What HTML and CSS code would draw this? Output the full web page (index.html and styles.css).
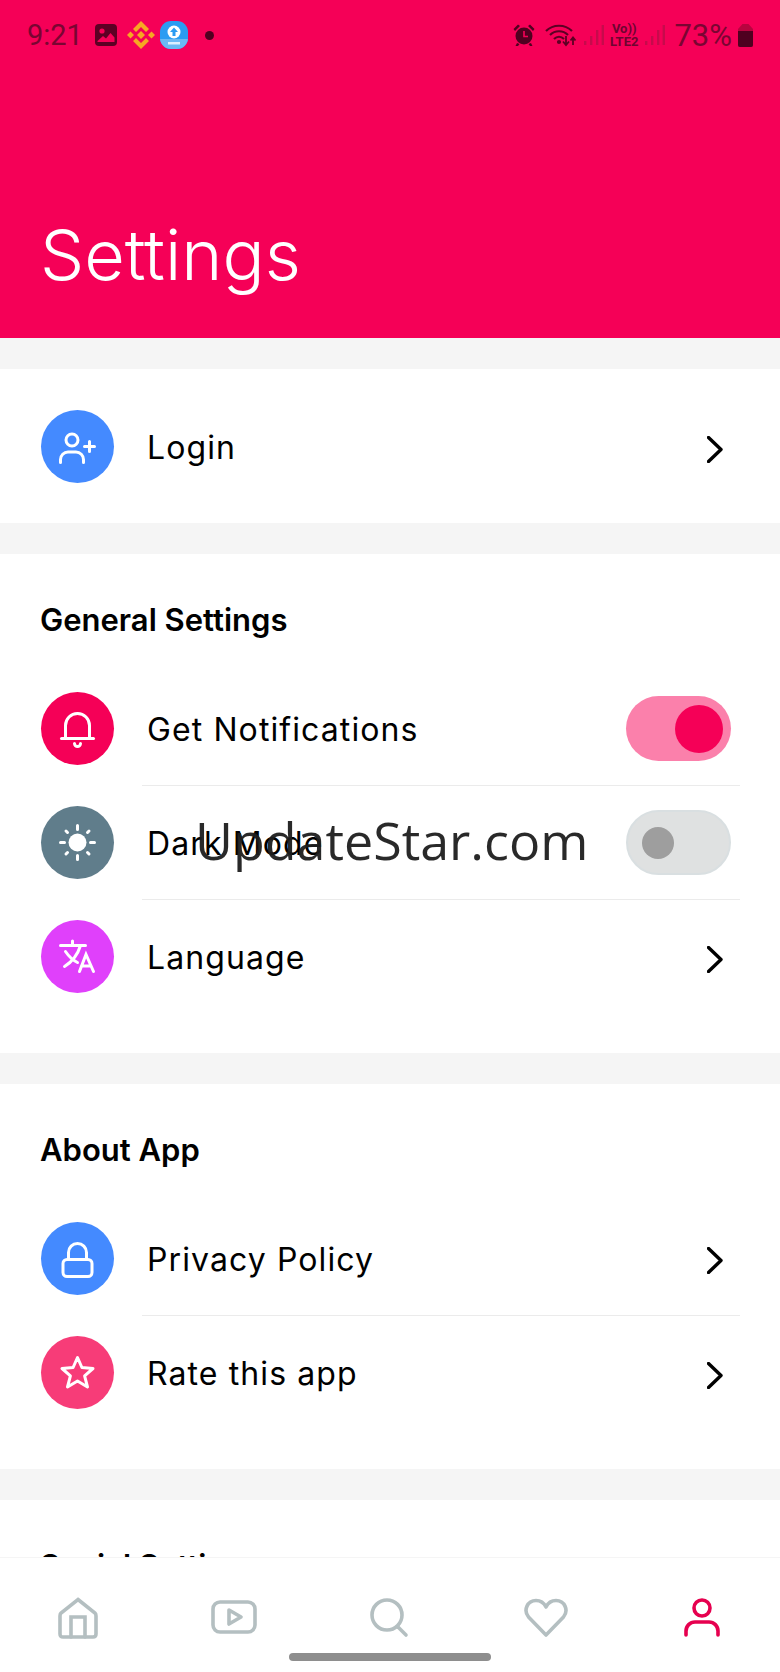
FILE: index.html
```html
<!DOCTYPE html>
<html lang="en">
<head>
  <meta charset="UTF-8">
  <title>Settings</title>
  <link rel="stylesheet" href="styles.css">
</head>
<body>
  <div class="screen">
    <div class="content">
      <header class="header">
        <div class="status">
          <span class="time">9:21</span>
          <svg class="st-gallery" width="24" height="24" viewBox="0 0 24 24"><rect x="1" y="1" width="22" height="22" rx="4" fill="#5c0024"/><circle cx="8" cy="8" r="2.6" fill="#f50057"/><path d="M3.5 18 L9 13 L12 15.5 L16.5 10 L20.5 14.5 V19 H3.5 Z" fill="#f50057"/></svg>
          <svg class="st-binance" width="28" height="28" viewBox="-14 -14 28 28" fill="#f6a623"><path d="M-4 0 L0 -4 L4 0 L0 4 Z"/><path d="M-14 0 L-10.5 -3.5 L-7 0 L-10.5 3.5 Z"/><path d="M7 0 L10.5 -3.5 L14 0 L10.5 3.5 Z"/><path d="M0 -14 L8 -6 L5 -3 L0 -8 L-5 -3 L-8 -6 Z"/><path d="M0 14 L8 6 L5 3 L0 8 L-5 3 L-8 6 Z"/></svg>
          <svg class="st-app" width="28" height="28" viewBox="0 0 28 28"><rect width="28" height="28" rx="11" fill="#2b9cf2"/><path d="M0 18 H28 V17 A11 11 0 0 1 17 28 H11 A11 11 0 0 1 0 17 Z" fill="#6bb9f3"/><circle cx="14" cy="11" r="6.5" fill="#fff"/><path d="M14 6.5 L18 11 H15.5 V15 H12.5 V11 H10 Z" fill="#2b9cf2"/><rect x="8" y="21" width="12" height="2.5" fill="#dcefff"/></svg>
          <span class="st-dot"></span>
          <span class="st-gap"></span>
          <svg class="st-alarm" width="22" height="24" viewBox="0 0 22 24" fill="#4f0020"><circle cx="11" cy="13" r="8.5"/><path d="M0.5 6 L5 1.5 L7 3 L2 8 Z M21.5 6 L17 1.5 L15 3 L20 8 Z M4 20 L2.5 23 H5 L6.5 21 Z M18 20 L19.5 23 H17 L15.5 21 Z"/><path d="M11 8 V13.5 H15" fill="none" stroke="#f50057" stroke-width="1.6"/></svg>
          <svg class="st-wifi" width="32" height="24" viewBox="0 0 32 24" fill="none" stroke="#5c0024" stroke-width="2.2"><path d="M1 8 C8 1 20 1 27 8"/><path d="M5 12 C10 7 18 7 23 12"/><path d="M9 16 C12 13 16 13 19 16"/><circle cx="14" cy="19" r="1" fill="#5c0024"/><path d="M21 13 V21 M18 18.5 L21 22 L24 18.5" stroke-width="1.8"/><path d="M28 22 V15 M25.5 17.5 L28 14.5 L30.5 17.5" stroke-width="1.8"/></svg>
          <svg class="st-signal" width="20" height="22" viewBox="0 0 20 22" fill="#c70a4c"><rect x="0" y="17" width="2.4" height="4"/><rect x="6" y="12" width="2.4" height="9"/><rect x="12" y="6" width="2.4" height="15"/><rect x="17.6" y="1" width="2.4" height="20"/></svg>
          <span class="st-volte"><span>Vo))</span><span>LTE2</span></span>
          <svg class="st-signal" width="20" height="22" viewBox="0 0 20 22" fill="#c70a4c"><rect x="0" y="17" width="2.4" height="4"/><rect x="6" y="12" width="2.4" height="9"/><rect x="12" y="6" width="2.4" height="15"/><rect x="17.6" y="1" width="2.4" height="20"/></svg>
          <span class="st-batt-text">73%</span>
          <svg class="st-batt" width="15" height="23" viewBox="0 0 15 23"><path d="M4.5 0 H10.5 L15 5 V21 A2 2 0 0 1 13 23 H2 A2 2 0 0 1 0 21 V5 Z" fill="#b8043f"/><path d="M0 7 H15 V21 A2 2 0 0 1 13 23 H2 A2 2 0 0 1 0 21 Z" fill="#4f0020"/></svg>
        </div>
        <h1 class="title">Settings</h1>
      </header>

      <section class="card card-login">
        <div class="row">
          <span class="icon icon-blue">
            <svg width="73" height="73" viewBox="-36.5 -36.5 73 73"><circle cx="-5.5" cy="-6.5" r="6"/><path d="M-17 16 V13 a7.5 7.5 0 0 1 7.5 -7.5 H-1.5 a7.5 7.5 0 0 1 7.5 7.5 V16"/><path d="M12 -5 V5 M7 0 H17"/></svg>
          </span>
          <div class="row-body no-line">
            <span class="label">Login</span>
            <svg class="chevron" width="16" height="27" viewBox="0 0 16 27"><path d="M1.5 1.5 L14 13.5 L1.5 25.5"/></svg>
          </div>
        </div>
      </section>

      <section class="card">
        <h2 class="card-title">General Settings</h2>
        <div class="row">
          <span class="icon icon-pink">
            <svg width="73" height="73" viewBox="-36.5 -36.5 73 73"><path d="M-12 9 V-3 a12 12 0 0 1 24 0 V9"/><path d="M-16 10 H16"/><path d="M-3 15 a3 3 0 0 0 6 0"/></svg>
          </span>
          <div class="row-body">
            <span class="label">Get Notifications</span>
            <span class="switch switch-on"><span class="knob"></span></span>
          </div>
        </div>
        <div class="row">
          <span class="icon icon-grey">
            <svg width="73" height="73" viewBox="-36.5 -36.5 73 73"><circle class="solid" r="9"/><path d="M0 -17 V-13 M0 13 V17 M-17 0 H-13 M13 0 H17 M-11.5 -11.5 L-10 -10 M11.5 -11.5 L10 -10 M-11.5 11.5 L-10 10 M11.5 11.5 L10 10"/></svg>
          </span>
          <div class="row-body">
            <span class="label">Dark Mode</span>
            <span class="switch switch-off"><span class="knob"></span></span>
          </div>
        </div>
        <div class="row">
          <span class="icon icon-purple">
            <svg width="73" height="73" viewBox="-36.5 -36.5 73 73"><path d="M-17 -11 H8 M-5 -15.5 V-11 M3 -11 C0 -1 -5 5 -13 10 M-12 -5 C-8 1 -4 4 0 6"/><path d="M2 15 L8.5 -2 L16 15 M4.5 9.5 H13.5"/></svg>
          </span>
          <div class="row-body no-line">
            <span class="label">Language</span>
            <svg class="chevron" width="16" height="27" viewBox="0 0 16 27"><path d="M1.5 1.5 L14 13.5 L1.5 25.5"/></svg>
          </div>
        </div>
      </section>

      <section class="card">
        <h2 class="card-title">About App</h2>
        <div class="row">
          <span class="icon icon-blue">
            <svg width="73" height="73" viewBox="-36.5 -36.5 73 73"><rect x="-14.5" y="1" width="29" height="17" rx="4"/><path d="M-9 1 V-6 a9 9 0 0 1 18 0 V1"/></svg>
          </span>
          <div class="row-body">
            <span class="label">Privacy Policy</span>
            <svg class="chevron" width="16" height="27" viewBox="0 0 16 27"><path d="M1.5 1.5 L14 13.5 L1.5 25.5"/></svg>
          </div>
        </div>
        <div class="row">
          <span class="icon icon-rose">
            <svg width="73" height="73" viewBox="-36.5 -36.5 73 73"><path stroke-linejoin="round" d="M0 -15 L4.4 -5 L15.5 -4 L7.1 3.3 L10 14.5 L0 8.5 L-10 14.5 L-7.1 3.3 L-15.5 -4 L-4.4 -5 Z"/></svg>
          </span>
          <div class="row-body no-line">
            <span class="label">Rate this app</span>
            <svg class="chevron" width="16" height="27" viewBox="0 0 16 27"><path d="M1.5 1.5 L14 13.5 L1.5 25.5"/></svg>
          </div>
        </div>
      </section>

      <section class="card">
        <h2 class="card-title">Social Settings</h2>
      </section>
    </div>

    <nav class="nav">
      <svg width="40" height="42" viewBox="0 0 40 42"><path d="M20 2.5 L37 16 Q38 17 38 19 V37 Q38 40 35 40 H5 Q2 40 2 37 V19 Q2 17 3 16 Z"/><path d="M13 40 V20 H27 V40"/></svg>
      <svg class="nav-video" width="46" height="34" viewBox="0 0 46 34"><rect x="2" y="2" width="42" height="30" rx="7"/><path d="M18 10 L30 17 L18 24 Z" stroke-linejoin="round"/></svg>
      <svg class="nav-search" width="40" height="40" viewBox="0 0 40 40"><circle cx="17" cy="17" r="15"/><path d="M28 29 L36 37"/></svg>
      <svg class="nav-search" width="44" height="40" viewBox="0 0 44 40"><path stroke-linejoin="round" d="M22 37 L4.5 19 C-1 12 3.5 2.5 12 2.5 C16.5 2.5 20 5 22 9 C24 5 27.5 2.5 32 2.5 C40.5 2.5 45 12 39.5 19 Z"/></svg>
      <svg class="nav-active nav-search" width="40" height="40" viewBox="0 0 40 40"><circle cx="20" cy="10" r="8"/><path d="M4 37 V33 a9 9 0 0 1 9 -9 H27 a9 9 0 0 1 9 9 V37"/></svg>
      <span class="home-bar"></span>
    </nav>

    <div class="watermark">UpdateStar.com</div>
  </div>
</body>
</html>
```

FILE: styles.css
```css
* {
  box-sizing: border-box;
}
body {
  margin: 0;
  font-family: "Inter", "Noto Sans", sans-serif;
  background: #fff;
  color: #000;
}
.screen {
  position: relative;
  width: 780px;
  height: 1672px;
  display: flex;
  flex-direction: column;
  overflow: hidden;
}
.content {
  flex: 1;
  overflow: hidden;
  background: #f5f5f5;
  display: flex;
  flex-direction: column;
  gap: 31px;
}

/* header */
.header {
  height: 338px;
  flex-shrink: 0;
  background: #f50057;
  display: flex;
  flex-direction: column;
  justify-content: space-between;
  padding: 20px 27px 43px 27px;
}
.status {
  height: 30px;
  display: flex;
  align-items: center;
}
.time, .st-batt-text {
  font-family: "Roboto", sans-serif;
  font-size: 29px;
  color: #7a0532;
}
.st-batt-text {
  font-size: 31px;
}
.st-gallery {
  margin-left: 11px;
}
.st-binance {
  margin-left: 9px;
}
.st-app {
  margin-left: 5px;
}
.st-dot {
  width: 9px;
  height: 9px;
  border-radius: 50%;
  background: #4f0020;
  margin-left: 17px;
}
.st-gap {
  flex: 1;
}
.st-wifi {
  margin-left: 10px;
}
.st-signal {
  margin-left: 7px;
}
.st-volte {
  display: flex;
  flex-direction: column;
  align-items: center;
  margin-left: 6px;
  font-family: "Roboto", sans-serif;
  font-size: 13px;
  font-weight: 700;
  line-height: 13px;
  color: #6e0530;
}
.st-batt-text {
  margin-left: 9px;
  margin-right: 6px;
}
.title {
  margin: 0 0 0 13px;
  font-size: 70px;
  line-height: 80px;
  font-weight: 300;
  color: #fff;
}

/* cards and rows */
.card {
  background: #fff;
  flex-shrink: 0;
  padding-bottom: 40px;
}
.card-login {
  padding: 20px 0;
}
.card-title {
  margin: 0 0 33px 40px;
  padding-top: 47px;
  font-size: 31px;
  line-height: 38px;
  font-weight: 600;
  height: 84px;
}
.row {
  height: 114px;
  display: flex;
  align-items: center;
  padding: 0 40px 0 41px;
}
.row-body {
  flex: 1;
  align-self: stretch;
  margin: 0 0 -1px 28px;
  padding: 0 9px 0 5px;
  border-bottom: 1px solid #ebebeb;
  display: flex;
  align-items: center;
  justify-content: space-between;
}
.no-line {
  border-bottom: none;
}
.label {
  padding-top: 2px;
  font-size: 32px;
  letter-spacing: 1.1px;
}
.chevron {
  margin: 5px 8px 0 0;
  fill: none;
  stroke: #000;
  stroke-width: 3.4;
  stroke-linecap: round;
  stroke-linejoin: round;
}

.icon {
  width: 73px;
  height: 73px;
  border-radius: 50%;
  flex-shrink: 0;
  display: flex;
}
.icon svg {
  fill: none;
  stroke: #fff;
  stroke-width: 3;
  stroke-linecap: round;
}
.icon svg .solid {
  fill: #fff;
  stroke: none;
}
.icon-blue { background: #448aff; }
.icon-pink { background: #f50057; }
.icon-grey { background: #607d8b; }
.icon-purple { background: #e040fb; }
.icon-rose { background: #f73c78; }

.switch {
  width: 105px;
  height: 65px;
  margin-top: 1px;
  border-radius: 33px;
  display: flex;
  align-items: center;
}
.switch-on {
  background: #fb80ab;
  justify-content: flex-end;
  padding-right: 8px;
}
.switch-on .knob {
  width: 48px;
  height: 48px;
  border-radius: 50%;
  background: #f50057;
}
.switch-off {
  background: #dfe1e1;
  border: 2px solid #d9dfe1;
  padding-left: 14px;
}
.switch-off .knob {
  width: 32px;
  height: 32px;
  border-radius: 50%;
  background: #9e9e9e;
}

/* bottom nav */
.nav {
  position: relative;
  height: 115px;
  flex-shrink: 0;
  background: #fff;
  border-top: 1px solid #f5f5f5;
  display: grid;
  grid-template-columns: repeat(5, 1fr);
  justify-items: center;
  align-items: start;
  padding-top: 39px;
}
.nav svg {
  fill: none;
  stroke: #b4bfc1;
  stroke-width: 3.6;
  stroke-linecap: round;
}
.nav svg.nav-active {
  stroke: #e6004f;
}
.nav svg.nav-video {
  margin-top: 3px;
}
.nav svg.nav-search {
  margin-top: 1px;
}
.home-bar {
  position: absolute;
  left: 289px;
  bottom: 11px;
  width: 202px;
  height: 8px;
  border-radius: 4px;
  background: #8e8e8e;
}

.watermark {
  position: absolute;
  left: 195px;
  top: 800px;
  font-family: "Open Sans", sans-serif;
  font-size: 52px;
  line-height: 80px;
  color: rgba(30, 30, 30, 0.95);
  white-space: nowrap;
}
```
